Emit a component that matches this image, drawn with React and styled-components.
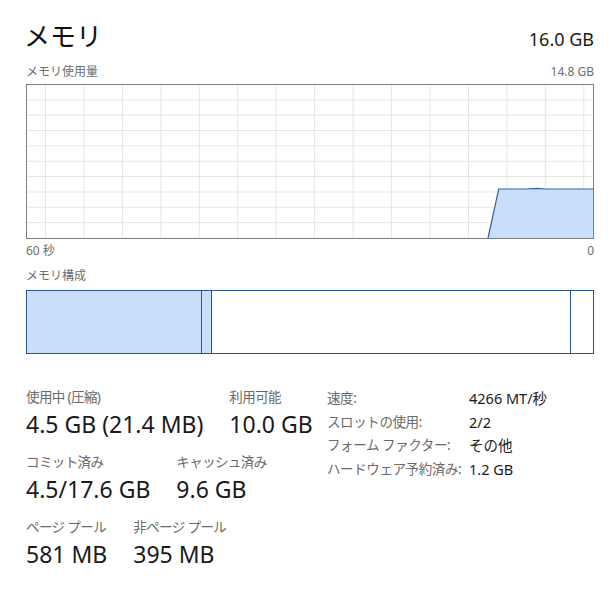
import React from 'react';
import styled, { createGlobalStyle } from 'styled-components';

const GlobalStyle = createGlobalStyle`
	html, body {
		margin: 0;
		padding: 0;
		background: #ffffff;
	}
	body {
		font-family: "Noto Sans", "Noto Sans CJK JP", sans-serif;
		color: #1a1a1a;
	}
`;

const GRAPH_W = 568;
const GRAPH_H = 155;

// usage history, in px inside the graph box
const usage = [
	[462, 154],
	[472.7, 105],
	[500, 105],
	[511, 104.3],
	[519, 105],
	[568, 105]
];

const leftStats = [
	[
		{ label: '使用中 (圧縮)', value: '4.5 GB (21.4 MB)' },
		{ label: '利用可能', value: '10.0 GB' }
	],
	[
		{ label: 'コミット済み', value: '4.5/17.6 GB' },
		{ label: 'キャッシュ済み', value: '9.6 GB' }
	],
	[
		{ label: 'ページ プール', value: '581 MB' },
		{ label: '非ページ プール', value: '395 MB' }
	]
];

const details = [
	[ '速度:', '4266 MT/秒' ],
	[ 'スロットの使用:', '2/2' ],
	[ 'フォーム ファクター:', 'その他' ],
	[ 'ハードウェア予約済み:', '1.2 GB' ]
];

const UsageGraph = () => {
	const cols = [];
	for (let x = 19.5; x < GRAPH_W - 1; x += 38.45) cols.push(x);
	const rows = [];
	for (let i = 1; i < 10; i++) rows.push(0.5 + i * 15.35);

	const area =
		usage.map(([ x, y ]) => `${x},${y}`).join(' ') + ` ${GRAPH_W - 1},${GRAPH_H - 1}`;
	const line = usage.map(([ x, y ]) => `${x},${y}`).join(' ');

	return (
		<GraphSvg width={GRAPH_W} height={GRAPH_H} viewBox={`0 0 ${GRAPH_W} ${GRAPH_H}`}>
			{cols.map((x) => (
				<line key={'c' + x} x1={x} y1={1} x2={x} y2={GRAPH_H - 1} stroke="#e6e6e6" strokeWidth="1" />
			))}
			{rows.map((y) => (
				<line key={'r' + y} x1={1} y1={y} x2={GRAPH_W - 1} y2={y} stroke="#e6e6e6" strokeWidth="1" />
			))}
			<polygon points={area} fill="#c8dffb" />
			<polyline points={line} fill="none" stroke="#2b64a8" strokeWidth="1.2" />
			<rect x="0.5" y="0.5" width={GRAPH_W - 1} height={GRAPH_H - 1} fill="none" stroke="#7f7f7f" strokeWidth="1" />
		</GraphSvg>
	);
};

const App = () => (
	<>
		<GlobalStyle />
		<Panel>
			<Header>
				<Title>メモリ</Title>
				<Total>16.0 GB</Total>
			</Header>
			<CaptionRow $gap={11}>
				<Caption>メモリ使用量</Caption>
				<Caption>14.8 GB</Caption>
			</CaptionRow>
			<GraphBox>
				<UsageGraph />
			</GraphBox>
			<CaptionRow $gap={4}>
				<Caption>60 秒</Caption>
				<Caption>0</Caption>
			</CaptionRow>
			<CaptionRow $gap={9}>
				<Caption>メモリ構成</Caption>
			</CaptionRow>
			<Composition>
				<Segment $width={175} $fill="#c8dffb" />
				<Segment $width={10} $fill="#c8dffb" />
				<Segment $fill="#ffffff" />
				<Segment $width={22} $fill="#ffffff" $last />
			</Composition>
			<Stats>
				<StatColumn>
					{leftStats.map((row, i) => (
						<StatRow key={i}>
							{row.map((s) => (
								<Stat key={s.label}>
									<StatLabel>{s.label}</StatLabel>
									<StatValue>{s.value}</StatValue>
								</Stat>
							))}
						</StatRow>
					))}
				</StatColumn>
				<DetailGrid>
					{details.map(([ k, v ]) => (
						<React.Fragment key={k}>
							<DetailKey>{k}</DetailKey>
							<DetailValue>{v}</DetailValue>
						</React.Fragment>
					))}
				</DetailGrid>
			</Stats>
		</Panel>
	</>
);

const Panel = styled.div`
	width: 616px;
	height: 592px;
	box-sizing: border-box;
	padding: 17px 22px 0 26px;
	display: flex;
	flex-direction: column;
	overflow: hidden;
`;

const Header = styled.div`
	display: flex;
	justify-content: space-between;
	align-items: baseline;
	height: 36px;
`;

const Title = styled.div`
	font-family: "Noto Sans CJK JP", sans-serif;
	font-size: 26px;
	line-height: 36px;
	margin-left: -2px;
	color: #111;
`;

const Total = styled.div`
	font-size: 18px;
	line-height: 36px;
	color: #1a1a1a;
`;

const CaptionRow = styled.div`
	display: flex;
	justify-content: space-between;
	margin-top: ${(p) => p.$gap}px;
	height: 16px;
`;

const Caption = styled.span`
	font-size: 12px;
	line-height: 16px;
	color: #6e6e6e;
`;

const GraphBox = styled.div`
	margin-top: 4px;
	height: ${GRAPH_H}px;
`;

const GraphSvg = styled.svg`
	display: block;
`;

const Composition = styled.div`
	margin-top: 6px;
	height: 64px;
	box-sizing: border-box;
	border: 1px solid #24578f;
	display: flex;
`;

const Segment = styled.div`
	flex: ${(p) => (p.$width ? `0 0 ${p.$width}px` : '1 1 auto')};
	box-sizing: border-box;
	background: ${(p) => p.$fill};
	border-right: ${(p) => (p.$last ? 'none' : '1px solid #24578f')};
`;

const Stats = styled.div`
	margin-top: 32px;
	display: flex;
	align-items: flex-start;
`;

const StatColumn = styled.div`
	width: 301px;
	display: flex;
	flex-direction: column;
	gap: 12px;
`;

const StatRow = styled.div`
	display: flex;
	gap: 26px;
`;

const Stat = styled.div`
	display: flex;
	flex-direction: column;
`;

const StatLabel = styled.div`
	font-size: 13.5px;
	line-height: 22px;
	color: #6a6a6a;
	white-space: nowrap;
	letter-spacing: -0.6px;
`;

const StatValue = styled.div`
	font-size: 23px;
	line-height: 30px;
	margin-top: 1px;
	color: #1a1a1a;
	white-space: nowrap;
`;

const DetailGrid = styled.div`
	margin-top: 1px;
	display: grid;
	grid-template-columns: 142px auto;
	grid-auto-rows: 23.5px;
`;

const DetailKey = styled.div`
	font-size: 13.5px;
	line-height: 23.5px;
	color: #6a6a6a;
	white-space: nowrap;
	letter-spacing: -0.4px;
`;

const DetailValue = styled.div`
	font-size: 14.5px;
	line-height: 23.5px;
	color: #1a1a1a;
	white-space: nowrap;
`;

export default App;
